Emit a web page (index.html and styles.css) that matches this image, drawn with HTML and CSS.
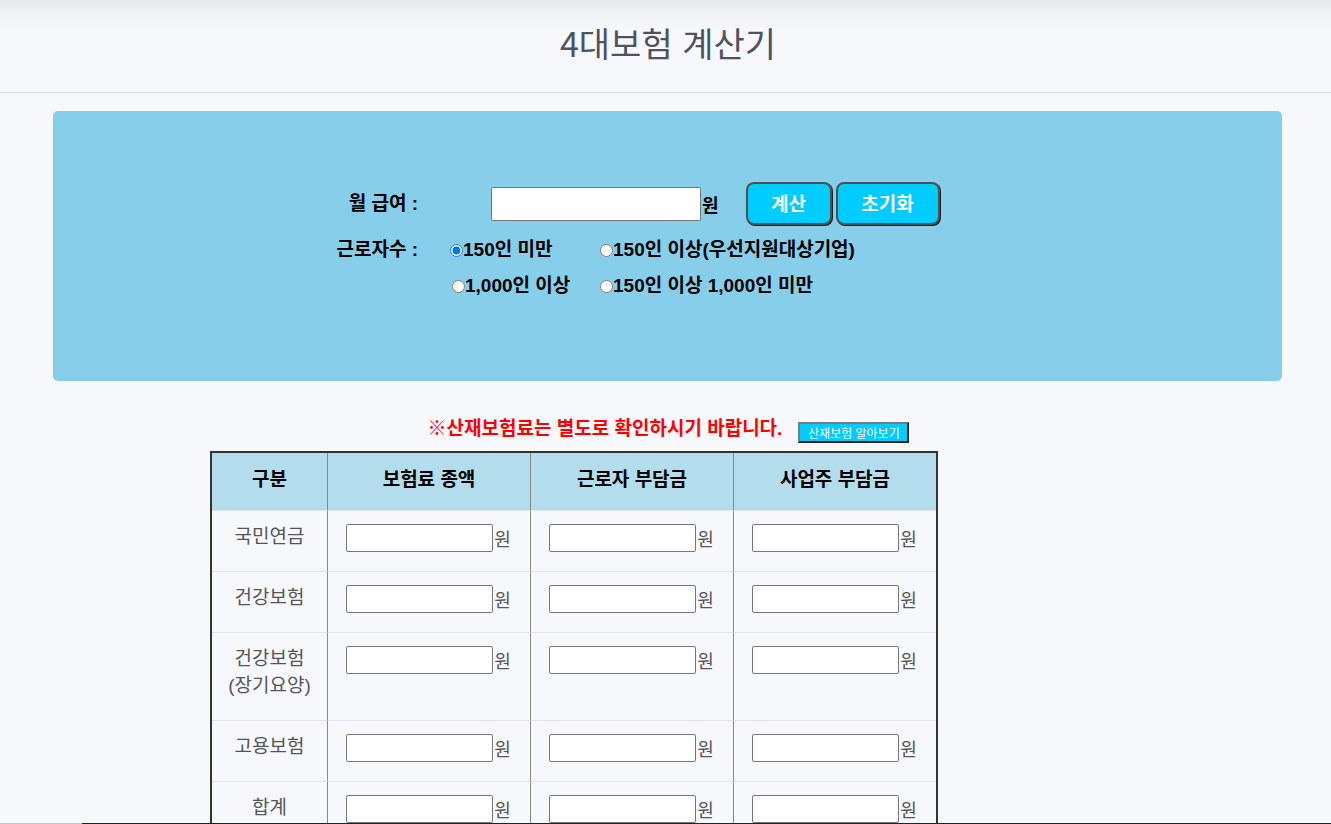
FILE: index.html
```html
<!DOCTYPE html>
<html lang="ko">
<head>
<meta charset="utf-8">
<title>4대보험 계산기</title>
<link rel="stylesheet" href="styles.css">
</head>
<body>
<header class="site-header">
  <h1 class="title">4대보험 계산기</h1>
</header>

<section class="panel">
  <div class="form-row row-salary">
    <span class="form-label">월 급여 :</span>
    <input class="salary-input" type="text">
    <span class="unit-bold">원</span>
    <button class="btn btn-calc" type="button">계산</button>
    <button class="btn btn-reset" type="button">초기화</button>
  </div>
  <div class="form-row row-workers">
    <span class="form-label">근로자수 :</span>
    <div class="options">
      <label class="opt"><input type="radio" name="workers" checked>150인 미만</label>
      <label class="opt"><input type="radio" name="workers">150인 이상(우선지원대상기업)</label>
      <label class="opt opt-shift"><input type="radio" name="workers">1,000인 이상</label>
      <label class="opt"><input type="radio" name="workers">150인 이상 1,000인 미만</label>
    </div>
  </div>
</section>

<div class="notice">
  <span class="notice-text">※산재보험료는 별도로 확인하시기 바랍니다.</span>
  <button class="mini-btn" type="button">산재보험 알아보기</button>
</div>

<table class="result">
  <colgroup>
    <col class="c1"><col class="c2"><col class="c3"><col class="c4">
  </colgroup>
  <thead>
    <tr><th>구분</th><th>보험료 종액</th><th>근로자 부담금</th><th>사업주 부담금</th></tr>
  </thead>
  <tbody>
    <tr>
      <td class="name">국민연금</td>
      <td><div class="amt"><input type="text"><span>원</span></div></td>
      <td><div class="amt"><input type="text"><span>원</span></div></td>
      <td><div class="amt"><input type="text"><span>원</span></div></td>
    </tr>
    <tr>
      <td class="name">건강보험</td>
      <td><div class="amt"><input type="text"><span>원</span></div></td>
      <td><div class="amt"><input type="text"><span>원</span></div></td>
      <td><div class="amt"><input type="text"><span>원</span></div></td>
    </tr>
    <tr>
      <td class="name">건강보험<br>(장기요양)</td>
      <td><div class="amt"><input type="text"><span>원</span></div></td>
      <td><div class="amt"><input type="text"><span>원</span></div></td>
      <td><div class="amt"><input type="text"><span>원</span></div></td>
    </tr>
    <tr>
      <td class="name">고용보험</td>
      <td><div class="amt"><input type="text"><span>원</span></div></td>
      <td><div class="amt"><input type="text"><span>원</span></div></td>
      <td><div class="amt"><input type="text"><span>원</span></div></td>
    </tr>
    <tr>
      <td class="name">합계</td>
      <td><div class="amt"><input type="text"><span>원</span></div></td>
      <td><div class="amt"><input type="text"><span>원</span></div></td>
      <td><div class="amt"><input type="text"><span>원</span></div></td>
    </tr>
  </tbody>
</table>

<div class="bottom-line"></div>
</body>
</html>
```

FILE: styles.css
```css
* { box-sizing: border-box; }

html, body {
  margin: 0;
  padding: 0;
  background: #f7f8fc;
}

body {
  font-family: "Liberation Sans", "Noto Sans CJK KR", sans-serif;
  color: #000;
  padding-bottom: 60px;
}

.site-header {
  height: 93px;
  background: linear-gradient(to bottom, #e7e8ec 0px, #f1f2f6 14px, #f7f8fc 30px);
  border-bottom: 1px solid #dcdde2;
  display: flex;
  justify-content: center;
  align-items: flex-start;
  padding-left: 5px;
}

.title {
  margin: 22px 0 0 0;
  font-family: "Noto Sans CJK KR", sans-serif;
  font-weight: 400;
  font-size: 34px;
  line-height: 42px;
  color: #4e535d;
  letter-spacing: 0;
}

.panel {
  margin: 18px 49px 0 53px;
  height: 270px;
  background: #87ceeb;
  border-radius: 5px;
  padding: 71px 0 0 225px;
}

.form-row {
  display: flex;
  align-items: center;
}

.form-label {
  width: 140px;
  text-align: right;
  font-weight: 700;
  font-size: 19px;
  line-height: 24px;
  white-space: pre;
}

.row-salary {
  height: 43px;
}

.salary-input {
  margin: 0 0 0 73px;
  width: 210px;
  height: 34px;
  border: 1px solid #767676;
  border-radius: 2px;
  background: #fff;
  padding: 0 4px;
}

.unit-bold {
  font-weight: 700;
  font-size: 18px;
  margin-left: 1px;
}

.btn {
  height: 43px;
  border: 2px solid #505050;
  border-radius: 8px;
  background: #00ccff;
  color: #fff;
  font-family: "Liberation Sans", "Noto Sans CJK KR", sans-serif;
  font-weight: 700;
  font-size: 19px;
  padding: 0 0 3px 0;
  box-shadow: 1px 1px 0 #222;
}

.btn-calc {
  width: 86px;
  margin-left: 27px;
}

.btn-reset {
  width: 104px;
  margin-left: 4px;
}

.row-workers {
  margin-top: 13px;
  align-items: flex-start;
}

.options {
  margin-left: 32px;
  display: grid;
  grid-template-columns: 150px auto;
  row-gap: 12px;
}

.opt {
  display: flex;
  align-items: center;
  font-weight: 700;
  font-size: 19px;
  line-height: 24px;
  white-space: nowrap;
}

.opt input {
  margin: 0;
  width: 13px;
  height: 13px;
}

.opt-shift input {
  margin-left: 2px;
}

.notice {
  margin-top: 36px;
  display: flex;
  justify-content: center;
  align-items: flex-start;
  padding-left: 6px;
}

.notice-text {
  color: #ff0000;
  font-weight: 700;
  font-size: 19px;
  line-height: 24px;
}

.mini-btn {
  margin: 5px 0 0 16px;
  width: 111px;
  height: 21px;
  padding: 0;
  background: #00ccff;
  color: #fff;
  font-family: "Liberation Sans", "Noto Sans CJK KR", sans-serif;
  font-size: 12px;
  border-style: solid;
  border-width: 2px;
  border-color: #7a7a7a #222 #222 #7a7a7a;
}

.result {
  margin: 8px 0 0 210px;
  width: 728px;
  table-layout: fixed;
  border-collapse: separate;
  border-spacing: 0;
  border: 2px solid #333;
  border-bottom: none;
}

.c1 { width: 115px; }
.c2 { width: 203px; }
.c3 { width: 203px; }
.c4 { width: 203px; }

.result th {
  background: #b3dcec;
  height: 57px;
  padding: 0 0 4px 0;
  font-weight: 700;
  font-size: 19px;
  line-height: 24px;
  text-align: center;
  vertical-align: middle;
}

.result th + th,
.result td + td {
  border-left: 1px solid #888;
}

.result td {
  background: #f6f8fc;
  border-top: 1px solid #e1e4ef;
  vertical-align: top;
  text-align: center;
  padding: 13px 0 0 0;
}

.result td.name {
  padding: 12px 0 21px 0;
  font-size: 19px;
  line-height: 27px;
  color: #555;
}

.amt {
  display: flex;
  justify-content: center;
  align-items: center;
  padding-right: 1px;
}

.amt input {
  margin: 0;
  width: 147px;
  height: 28px;
  border: 1px solid #767676;
  border-radius: 2px;
  background: #fff;
}

.amt span {
  font-size: 18px;
  color: #555;
  margin-left: 1px;
}

.bottom-line {
  position: fixed;
  left: 0;
  right: 0;
  bottom: 0;
  height: 1px;
  background: linear-gradient(to right, #c4c4c4 82px, #222 82px);
}
```
